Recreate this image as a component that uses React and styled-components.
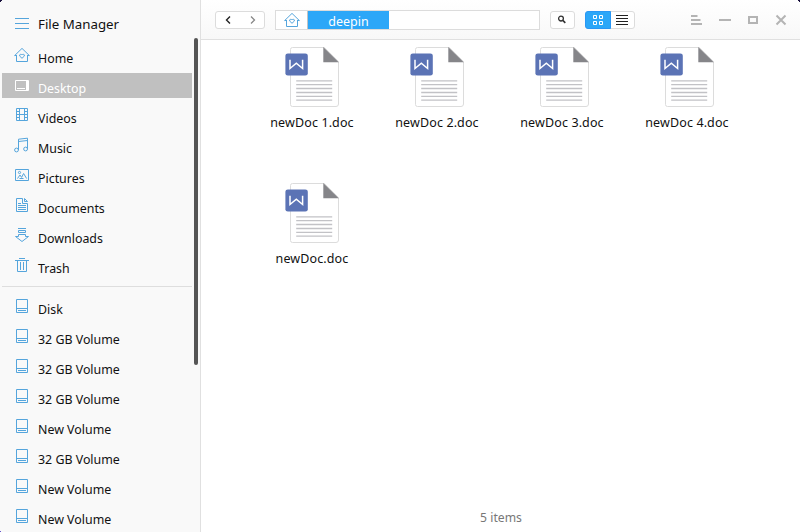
import React from "react";
import styled, { createGlobalStyle } from "styled-components";

const Global = createGlobalStyle`
  *, *::before, *::after { box-sizing: border-box; }
  body { margin: 0; overflow: hidden; background: #fff; font-family: "Noto Sans", "Open Sans", sans-serif; }
  svg { display: block; }
`;

const Window = styled.div`
  width: 800px;
  height: 532px;
  display: flex;
  position: relative;
  overflow: hidden;
  background: #fff;
  color: #111;
`;

const Sidebar = styled.aside`
  position: relative;
  width: 201px;
  flex: none;
  background: #f9f9f9;
  border-right: 1px solid #e0e0e0;
  overflow: hidden;
`;

const Brand = styled.header`
  height: 43px;
  padding: 0 0 0 15px;
  display: flex;
  align-items: flex-start;
  gap: 9px;
  font-size: 13.3px;
  line-height: 20px;
  white-space: nowrap;
  svg { margin-top: 18px; }
  span { margin-top: 14px; }
`;

const NavList = styled.ul`
  list-style: none;
  margin: 0;
  padding: 0 0 0 2px;
  display: flex;
  flex-direction: column;
  gap: 5px;
`;

const NavItem = styled.li`
  width: 190px;
  height: 25px;
  flex: none;
  display: flex;
  align-items: flex-start;
  padding-left: 12px;
  gap: 8px;
  font-size: 12.4px;
  line-height: 20px;
  white-space: nowrap;
  color: ${(p) => (p.$active ? "#fff" : "#111")};
  background: ${(p) => (p.$active ? "#c0c0c0" : "transparent")};
  svg { margin-top: 4px; }
  span { margin-top: 6px; }
`;

const Divider = styled.hr`
  width: 190px;
  height: 1px;
  border: 0;
  background: #dedede;
  margin: 8px 0 7px 2px;
`;

const ScrollThumb = styled.div`
  position: absolute;
  left: 194px;
  top: 38px;
  width: 4px;
  height: 327px;
  border-radius: 2px;
  background: #555;
`;

const Main = styled.main`
  flex: 1;
  display: flex;
  flex-direction: column;
`;

const Toolbar = styled.header`
  height: 40px;
  flex: none;
  display: flex;
  align-items: center;
  padding: 0 12px 0 14px;
  background: linear-gradient(#fff, #f8f8f8);
  border-bottom: 1px solid #e0e0e0;
`;

const ButtonGroup = styled.div`
  display: flex;
  width: ${(p) => p.$width}px;
  height: 18px;
  margin-right: 10px;
  border: 1px solid #dcdcdc;
  border-radius: 3px;
  background: #fff;
`;

const ToolButton = styled.button`
  flex: 1;
  display: flex;
  align-items: center;
  justify-content: center;
  margin: ${(p) => (p.$active ? "-1px 0 -1px -1px" : "0")};
  padding: 0;
  border: ${(p) => (p.$active ? "1px solid #2997f5" : "0")};
  border-radius: ${(p) => (p.$active ? "3px 0 0 3px" : "0")};
  background: ${(p) => (p.$active ? "#2ca7f8" : "transparent")};
`;

const AddressBar = styled.div`
  width: 265px;
  height: 20px;
  margin-right: 10px;
  display: flex;
  align-items: stretch;
  border: 1px solid #dcdcdc;
  background: #fff;
`;

const HomeCrumb = styled.div`
  width: 32px;
  display: flex;
  align-items: center;
  padding-left: 8px;
  border-right: 1px solid #c4c4c4;
`;

const Crumb = styled.div`
  width: 81px;
  background: #2ca7f8;
  color: #fff;
  font-size: 12.5px;
  line-height: 18px;
  padding-top: 2px;
  text-align: center;
`;

const WindowControls = styled.div`
  margin-left: auto;
  display: flex;
  align-items: center;
  gap: 14px;
`;

const ControlButton = styled.button`
  width: 14px;
  height: 14px;
  padding: 0;
  border: 0;
  background: transparent;
`;

const FileGrid = styled.div`
  flex: 1;
  display: grid;
  grid-template-columns: repeat(4, 125px);
  grid-auto-rows: 136px;
  padding: 6px 0 0 48px;
`;

const FileTile = styled.div`
  display: flex;
  flex-direction: column;
  align-items: center;
  font-size: 12.5px;
  letter-spacing: 0.12px;
  line-height: 20px;
  white-space: nowrap;
  span { margin-top: 5px; padding-left: 1px; }
`;

const Status = styled.footer`
  height: 30px;
  flex: none;
  font-size: 12.2px;
  line-height: 28px;
  padding: 2px 0 0 1px;
  text-align: center;
  color: #777;
`;

const Corner = styled.div`
  position: absolute;
  width: 2px;
  height: 2px;
  top: ${(p) => (p.$bottom ? "auto" : 0)};
  bottom: ${(p) => (p.$bottom ? 0 : "auto")};
  left: ${(p) => (p.$right ? "auto" : 0)};
  right: ${(p) => (p.$right ? 0 : "auto")};
  background: ${(p) => p.$color};
  clip-path: ${(p) =>
    p.$bottom
      ? "polygon(0 50%, 50% 50%, 50% 100%, 0 100%)"
      : p.$right
      ? "polygon(0 0, 100% 0, 100% 100%, 50% 100%, 50% 50%, 0 50%)"
      : "polygon(0 0, 100% 0, 100% 50%, 50% 50%, 50% 100%, 0 100%)"};
`;

const glyphs = {
  home: (
    <>
      <path d="M.7 8.5 8 1.4l7.3 7.1M.5 8.5H3M13 8.5h2.5M2.5 8v6.5h11V8" />
      <path d="M8 11.3 5.7 9.1q-.5-1.7 1-1.8Q7.6 7.2 8 8q.4-.8 1.3-.7 1.5.1 1 1.8Z" />
    </>
  ),
  desktop: (
    <>
      <path d="M1.5 3.5h13v10h-13z" />
      <path d="M13 3v11" strokeWidth="2" />
      <path d="M3 11.5h8" />
    </>
  ),
  video: <path d="M2.5 1.5h11v12h-11zM5.5 1.5v12M10.5 1.5v12M5.5 7.5h5M2.5 4.5h3M2.5 7.5h3M2.5 10.5h3M10.5 4.5h3M10.5 7.5h3M10.5 10.5h3" />,
  music: (
    <>
      <path d="M4.5 13V2.2l9-1V11.8M4.5 4.5l9-1" />
      <circle cx="2.5" cy="13" r="1.9" />
      <circle cx="11.6" cy="12" r="1.9" />
    </>
  ),
  picture: (
    <>
      <path d="M1.5 2.5h13v11h-13z" />
      <circle cx="5.5" cy="5.5" r="1.1" />
      <path d="M3.5 11.5 6 8l1.6 2.4L9.6 6.5l3 5M5.5 11.5h4" />
    </>
  ),
  document: <path d="M8.5 1.5h-6v13h11v-8h-5v-5M10.5 1.5v3h3M10.5 1.5l3 3M4 8.5h3M4 6.5h3M4 8.5h8M4 10.5h8M4 12.5h8" />,
  download: <path d="M4 1.5h8M4.5 3.5h7v2h-7zM4.5 7.5v2h-3L8 14.5l6.5-5h-3v-2Z" />,
  trash: <path d="M5 1.5h6M1 3.5h14M3.5 3.5v11h9v-11M6.5 5v8M9.5 5v8" />,
  disk: <path d="M2.5 1.5h11v13h-11zM2.5 10.5h11M4 12.5h8" />,
};

const Glyph = ({ name, color = "#55a5dc" }) => (
  <svg width="16" height="16" viewBox="0 0 16 16" fill="none" stroke={color} strokeWidth="1">
    {glyphs[name]}
  </svg>
);

const DocIcon = () => (
  <svg width="55" height="62" viewBox="0 0 55 62">
    <path d="M8.5 1.5h31.8l14.2 14.2V58q0 2.5-2.5 2.5H8.5q-2 0-2-2v-55q0-2 2-2Z" fill="#fff" stroke="#dcdcdc" />
    <path d="M39.3 1 54.8 16.2H39.3Z" fill="#858589" />
    <path d="M12.2 34.9h36M12.2 38.7h36M12.2 42.5h36M12.2 46.5h36M12.2 50.3h36M12.2 54.2h36" stroke="#c2c2c6" strokeWidth="1.3" />
    <rect x="1.4" y="7.4" width="22.4" height="22.2" rx="2.4" fill="#5b73b5" />
    <path d="M6 13.8v8.7l6.3-5.3 6.3 5.3v-8.7" fill="none" stroke="#fff" strokeWidth="1.5" />
  </svg>
);

const places = [
  ["home", "Home"],
  ["desktop", "Desktop"],
  ["video", "Videos"],
  ["music", "Music"],
  ["picture", "Pictures"],
  ["document", "Documents"],
  ["download", "Downloads"],
  ["trash", "Trash"],
];
const volumes = ["Disk", "32 GB Volume", "32 GB Volume", "32 GB Volume", "New Volume", "32 GB Volume", "New Volume", "New Volume"];
const files = ["newDoc 1.doc", "newDoc 2.doc", "newDoc 3.doc", "newDoc 4.doc", "newDoc.doc"];
const controls = [
  ["Menu", "M1 3h6.5M1 7h9.5M1 11h11"],
  ["Minimize", "M1 7h12"],
  ["Maximize", "M3 4h8v6H3z"],
  ["Close", "M2.5 2.5l9 9M11.5 2.5l-9 9"],
];

export default function App() {
  return (
    <>
      <Global />
      <Window>
        <Sidebar>
          <Brand>
            <svg width="14" height="12" stroke="#55a5dc"><path d="M0 .5h14M0 5.5h14M0 10.5h14" /></svg>
            <span>File Manager</span>
          </Brand>
          <NavList>
            {places.map(([icon, label]) => (
              <NavItem key={label} $active={label === "Desktop"}>
                <Glyph name={icon} color={label === "Desktop" ? "#fff" : undefined} />
                <span>{label}</span>
              </NavItem>
            ))}
          </NavList>
          <Divider />
          <NavList>
            {volumes.map((label, i) => (
              <NavItem key={i}>
                <Glyph name="disk" />
                <span>{label}</span>
              </NavItem>
            ))}
          </NavList>
          <ScrollThumb />
        </Sidebar>
        <Main>
          <Toolbar>
            <ButtonGroup $width={50}>
              <ToolButton aria-label="Back">
                <svg width="8" height="10" fill="none" stroke="#222" strokeWidth="1.4"><path d="M6 1.5 2.5 5 6 8.5" /></svg>
              </ToolButton>
              <ToolButton aria-label="Forward">
                <svg width="8" height="10" fill="none" stroke="#888" strokeWidth="1.3"><path d="M3 1.5 6.5 5 3 8.5" /></svg>
              </ToolButton>
            </ButtonGroup>
            <AddressBar>
              <HomeCrumb><Glyph name="home" /></HomeCrumb>
              <Crumb>deepin</Crumb>
            </AddressBar>
            <ButtonGroup $width={25}>
              <ToolButton aria-label="Search">
                <svg width="11" height="9" fill="none" stroke="#333"><circle cx="4" cy="3.6" r="2.4" strokeWidth="1.3" /><path d="m5.8 5.4 2.5 2.5" strokeWidth="1.6" /></svg>
              </ToolButton>
            </ButtonGroup>
            <ButtonGroup $width={50}>
              <ToolButton $active aria-label="Icon view">
                <svg width="10" height="10" fill="none" stroke="#fff"><path d="M.5 .5h3v3h-3zM6.5 .5h3v3h-3zM.5 6.5h3v3h-3zM6.5 6.5h3v3h-3z" /></svg>
              </ToolButton>
              <ToolButton aria-label="List view">
                <svg width="12" height="10" stroke="#222"><path d="M0 .5h12M0 3.5h12M0 6.5h12M0 9.5h12" /></svg>
              </ToolButton>
            </ButtonGroup>
            <WindowControls>
              {controls.map(([label, d]) => (
                <ControlButton key={label} aria-label={label}>
                  <svg width="14" height="14" fill="none" stroke="#b4b4b4" strokeWidth="2"><path d={d} /></svg>
                </ControlButton>
              ))}
            </WindowControls>
          </Toolbar>
          <FileGrid>
            {files.map((name) => (
              <FileTile key={name}>
                <DocIcon />
                <span>{name}</span>
              </FileTile>
            ))}
          </FileGrid>
          <Status>5 items</Status>
        </Main>
        <Corner $color="#18103c" />
        <Corner $right $color="#18103c" />
        <Corner $bottom $color="#6655cc" />
      </Window>
    </>
  );
}
